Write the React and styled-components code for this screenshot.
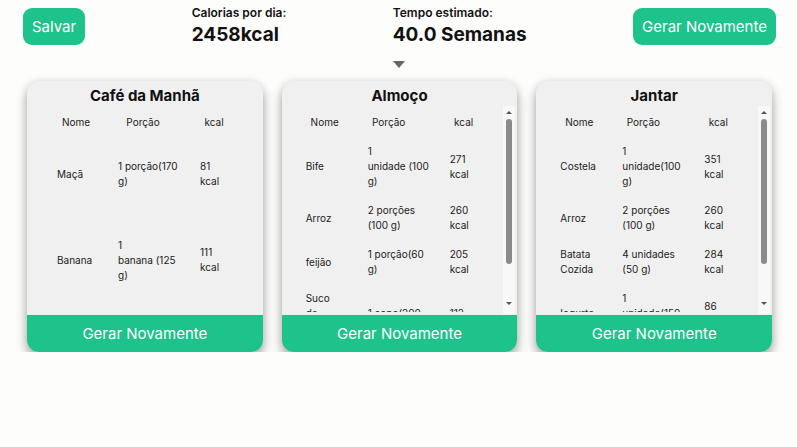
import React from 'react';
import styled, { createGlobalStyle } from 'styled-components';

const GREEN = '#1ec28b';

const meals = [
  {
    title: 'Café da Manhã',
    scroll: false,
    inset: 23,
    rows: '29px 74px 98px',
    cols: [
      { w: 52, pad: 7 },
      { w: 82, pad: 16 },
      { w: 60, pad: 16 },
    ],
    items: [
      { name: ['Maçã'], portion: ['1 porção(170', 'g)'], kcal: ['81', 'kcal'] },
      { name: ['Banana'], portion: ['1', 'banana (125', 'g)'], kcal: ['111', 'kcal'] },
    ],
  },
  {
    title: 'Almoço',
    scroll: true,
    inset: 17,
    cols: [
      { w: 52, pad: 7 },
      { w: 76, pad: 17 },
      { w: 74, pad: 23 },
    ],
    items: [
      { name: ['Bife'], portion: ['1', 'unidade (100', 'g)'], kcal: ['271', 'kcal'] },
      { name: ['Arroz'], portion: ['2 porções', '(100 g)'], kcal: ['260', 'kcal'] },
      { name: ['feijão'], portion: ['1 porção(60', 'g)'], kcal: ['205', 'kcal'] },
      { name: ['Suco', 'de', 'laranja', 'natural'], portion: ['1 copo(200', 'ml)'], kcal: ['112', 'kcal'] },
    ],
  },
  {
    title: 'Jantar',
    scroll: true,
    inset: 17,
    cols: [
      { w: 52, pad: 7 },
      { w: 76, pad: 17 },
      { w: 74, pad: 23 },
    ],
    items: [
      { name: ['Costela'], portion: ['1', 'unidade(100', 'g)'], kcal: ['351', 'kcal'] },
      { name: ['Arroz'], portion: ['2 porções', '(100 g)'], kcal: ['260', 'kcal'] },
      { name: ['Batata', 'Cozida'], portion: ['4 unidades', '(50 g)'], kcal: ['284', 'kcal'] },
      { name: ['Iogurte'], portion: ['1', 'unidade(150', 'g)'], kcal: ['86', 'kcal'] },
    ],
  },
];

const Lines = ({ lines }) =>
  lines.map((l, i) => (
    <React.Fragment key={i}>
      {i > 0 && <br />}
      {l}
    </React.Fragment>
  ));

export default function App() {
  return (
    <>
      <GlobalStyle />
      <Header>
        <GreenButton>Salvar</GreenButton>
        <Stat>
          <StatLabel>Calorias por dia:</StatLabel>
          <StatValue>2458kcal</StatValue>
        </Stat>
        <Stat>
          <StatLabel>Tempo estimado:</StatLabel>
          <StatValue>40.0 Semanas</StatValue>
        </Stat>
        <GreenButton>Gerar Novamente</GreenButton>
      </Header>
      <Caret />
      <Cards>
        {meals.map((meal) => (
          <Card key={meal.title}>
            <CardTitle>{meal.title}</CardTitle>
            <Scroll>
              <Table
                $inset={meal.inset}
                $cols={meal.cols.map((c) => `${c.w}px`).join(' ')}
                $rows={meal.rows}
              >
                <HeadCell>Nome</HeadCell>
                <HeadCell>Porção</HeadCell>
                <HeadCell>kcal</HeadCell>
                {meal.items.map((item, i) => (
                  <React.Fragment key={i}>
                    <Cell $pad={meal.cols[0].pad}><Lines lines={item.name} /></Cell>
                    <Cell $pad={meal.cols[1].pad}><Lines lines={item.portion} /></Cell>
                    <Cell $pad={meal.cols[2].pad}><Lines lines={item.kcal} /></Cell>
                  </React.Fragment>
                ))}
              </Table>
            </Scroll>
            {meal.scroll && (
              <ScrollTrack>
                <ScrollArrow />
                <ScrollThumb />
                <ScrollArrow $down />
              </ScrollTrack>
            )}
            <CardFooter>Gerar Novamente</CardFooter>
          </Card>
        ))}
      </Cards>
    </>
  );
}

const GlobalStyle = createGlobalStyle`
  html, body {
    margin: 0;
    background: #fdfdfc;
    font-family: Inter, "Noto Sans", sans-serif;
    color: #111;
  }
`;

const Header = styled.header`
  display: flex;
  justify-content: space-between;
  align-items: flex-start;
  padding: 8px 21px 0 23px;
`;

const GreenButton = styled.button`
  height: 37px;
  padding: 0 9px;
  border: none;
  border-radius: 9px;
  background: ${GREEN};
  color: #fff;
  font-family: inherit;
  font-size: 15px;
  font-weight: 400;
`;

const Stat = styled.div`
  display: flex;
  flex-direction: column;
  margin-top: -2px;
`;

const StatLabel = styled.span`
  font-size: 12px;
  line-height: 14px;
  font-weight: 600;
`;

const StatValue = styled.span`
  margin-top: 3px;
  font-size: 19px;
  line-height: 24px;
  font-weight: 700;
`;

const Caret = styled.div`
  width: 0;
  height: 0;
  margin: 14px auto 13px;
  border-left: 6px solid transparent;
  border-right: 6px solid transparent;
  border-top: 7px solid #666;
`;

const Cards = styled.main`
  display: flex;
  gap: 19px;
  padding: 0 25px 0 27px;
`;

const Card = styled.section`
  position: relative;
  display: flex;
  flex-direction: column;
  width: 236px;
  height: 271px;
  border-radius: 12px;
  background: #f0f0f0;
  overflow: hidden;
  box-shadow: 0 7px 12px rgba(0, 0, 0, 0.32), 0 0 8px rgba(0, 0, 0, 0.1);
`;

const CardTitle = styled.h2`
  margin: 0;
  padding-top: 4px;
  height: 23px;
  line-height: 22px;
  text-align: center;
  font-size: 15px;
  font-weight: 700;
  color: #111;
`;

const Scroll = styled.div`
  flex: 1;
  min-height: 0;
  margin-bottom: 3px;
  overflow-y: auto;
  scrollbar-width: none;
  &::-webkit-scrollbar {
    display: none;
  }
`;

const ScrollTrack = styled.div`
  position: absolute;
  top: 25px;
  bottom: 38px;
  right: 2px;
  width: 12px;
  display: flex;
  flex-direction: column;
  align-items: center;
  background: #f8f8f8;
`;

const ScrollArrow = styled.div`
  width: 0;
  height: 0;
  margin: ${(p) => (p.$down ? 'auto 0 9px' : '5px 0 0')};
  border-left: 3px solid transparent;
  border-right: 3px solid transparent;
  ${(p) => (p.$down ? 'border-top' : 'border-bottom')}: 3px solid #555;
`;

const ScrollThumb = styled.div`
  width: 6px;
  height: 145px;
  margin-top: 5px;
  border-radius: 3px;
  background: #8b8b8b;
`;

const Table = styled.div`
  display: grid;
  grid-template-columns: ${(p) => p.$cols};
  grid-template-rows: ${(p) => p.$rows || 'none'};
  align-items: center;
  padding-left: ${(p) => p.$inset}px;
  font-size: 10px;
  line-height: 15px;
  color: #222;
`;

const HeadCell = styled.div`
  padding: 7px 0;
  text-align: center;
`;

const Cell = styled.div`
  padding: 7px 0 7px ${(p) => p.$pad}px;
  white-space: nowrap;
`;

const CardFooter = styled.button`
  flex: none;
  height: 37px;
  border: none;
  background: ${GREEN};
  color: #fff;
  font-family: inherit;
  font-size: 15px;
  font-weight: 400;
`;
